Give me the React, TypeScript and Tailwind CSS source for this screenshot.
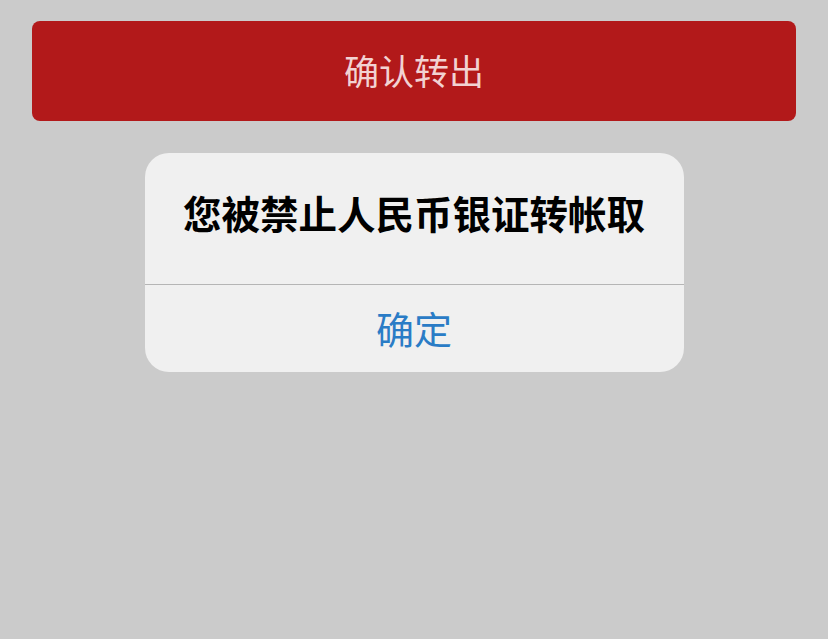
export default function App() {
  return (
    <div
      className="flex min-h-[639px] w-full flex-col items-center bg-[#cbcbcb] pt-[21px]"
      style={{ fontFamily: '"Noto Sans CJK SC", "Noto Sans", sans-serif' }}
    >
      <button className="flex h-[100px] w-[764px] items-center justify-center rounded-[8px] bg-[#b2191a] pb-[2px] text-[35px] font-normal text-[#f2d2d2]">
        确认转出
      </button>

      <div className="mt-[32px] flex w-[539px] flex-col overflow-hidden rounded-[24px] bg-[#f0f0f0]">
        <div className="flex h-[131px] items-center justify-center pb-[12px] text-[38.5px] font-bold text-black">
          您被禁止人民币银证转帐取
        </div>
        <div className="h-px bg-[#b5b5b5]" />
        <div className="flex h-[87px] items-center justify-center pb-[2px] text-[38px] text-[#2a7cc6]">
          确定
        </div>
      </div>
    </div>
  );
}
